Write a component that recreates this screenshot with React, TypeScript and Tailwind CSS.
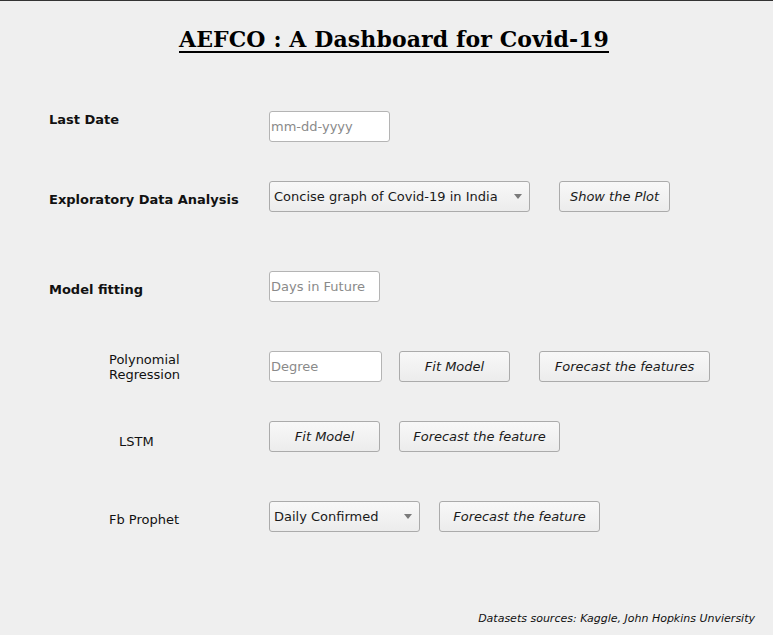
const font = { fontFamily: '"DejaVu Sans", "Liberation Sans", sans-serif' };

function Field({ placeholder, width }: { placeholder: string; width: string }) {
  return (
    <div
      className={`${width} h-[31px] flex items-center pl-[1px] bg-white border border-[#b4b4b4] rounded-[3px] text-[13px] text-[#8a8a8a]`}
    >
      {placeholder}
    </div>
  );
}

function Button({ label, width }: { label: string; width: string }) {
  return (
    <div
      className={`${width} h-[31px] flex items-center justify-center italic text-[13px] text-[#1a1a1a] border border-[#ababab] rounded-[3px] bg-gradient-to-b from-[#f8f8f8] to-[#ececec]`}
    >
      {label}
    </div>
  );
}

function Combo({ value, width }: { value: string; width: string }) {
  return (
    <div
      className={`${width} h-[31px] flex items-center justify-between pl-[4px] pr-[7px] text-[13px] text-[#1a1a1a] border border-[#ababab] rounded-[3px] bg-gradient-to-b from-[#f8f8f8] to-[#ececec]`}
    >
      <span>{value}</span>
      <svg width="8" height="5" viewBox="0 0 8 5">
        <path d="M0 0h8L4 5z" fill="#7a7a7a" />
      </svg>
    </div>
  );
}

export default function App() {
  return (
    <div
      className="w-[773px] h-[635px] bg-[#efefef] border-t border-[#333333] text-[#111111] overflow-hidden"
      style={font}
    >
      <div className="pt-[25px] pl-[179px]">
        <h1
          className="inline-block font-bold text-[22px] leading-[26px] tracking-[0.1px] underline underline-offset-[4px] decoration-[2px] text-black"
          style={{ fontFamily: '"DejaVu Serif", "Liberation Serif", serif' }}
        >
          AEFCO : A Dashboard for Covid-19
        </h1>
      </div>

      <div className="pl-[49px]">
        {/* Last Date */}
        <div className="flex mt-[57px] h-[31px]">
          <div className="w-[220px] pt-[1px] font-bold text-[13px] leading-[15px]">Last Date</div>
          <Field placeholder="mm-dd-yyyy" width="w-[121px]" />
        </div>

        {/* EDA */}
        <div className="flex mt-[39px] h-[31px]">
          <div className="w-[220px] pt-[11px] font-bold text-[13px] leading-[15px]">Exploratory Data Analysis</div>
          <Combo value="Concise graph of Covid-19 in India" width="w-[261px]" />
          <div className="ml-[29px]">
            <Button label="Show the Plot" width="w-[111px]" />
          </div>
        </div>

        {/* Model fitting */}
        <div className="flex mt-[59px] h-[31px]">
          <div className="w-[220px] pt-[11px] font-bold text-[13px] leading-[15px]">Model fitting</div>
          <Field placeholder="Days in Future" width="w-[111px]" />
        </div>

        {/* Polynomial Regression */}
        <div className="flex mt-[49px] h-[31px]">
          <div className="w-[220px] pl-[60px] pt-[1px] text-[13px] leading-[15px]">
            Polynomial
            <br />
            Regression
          </div>
          <Field placeholder="Degree" width="w-[113px]" />
          <div className="ml-[17px]">
            <Button label="Fit Model" width="w-[111px]" />
          </div>
          <div className="ml-[29px]">
            <Button label="Forecast the features" width="w-[171px]" />
          </div>
        </div>

        {/* LSTM */}
        <div className="flex mt-[39px] h-[31px]">
          <div className="w-[220px] pl-[70px] pt-[13px] text-[13px] leading-[15px]">LSTM</div>
          <Button label="Fit Model" width="w-[111px]" />
          <div className="ml-[19px]">
            <Button label="Forecast the feature" width="w-[161px]" />
          </div>
        </div>

        {/* Fb Prophet */}
        <div className="flex mt-[49px] h-[31px]">
          <div className="w-[220px] pl-[60px] pt-[11px] text-[13px] leading-[15px]">Fb Prophet</div>
          <Combo value="Daily Confirmed" width="w-[151px]" />
          <div className="ml-[19px]">
            <Button label="Forecast the feature" width="w-[161px]" />
          </div>
        </div>
      </div>

      <div className="mt-[80px] pr-[18px] text-right italic text-[11px] leading-[14px] text-[#111111]">
        Datasets sources: Kaggle, John Hopkins Unviersity
      </div>
    </div>
  );
}
